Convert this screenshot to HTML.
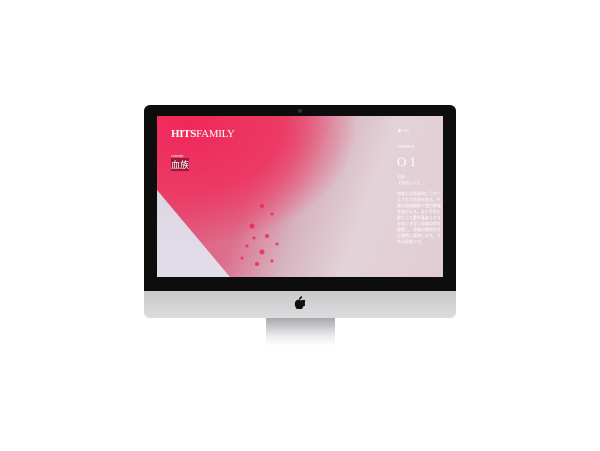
<!DOCTYPE html>
<html><head><style>
body{margin:0;width:600px;height:451px;background:#fff;position:relative;overflow:hidden;font-family:"Liberation Serif","Noto Serif CJK SC",serif}
.bez{position:absolute;left:144px;top:105px;width:312px;height:186px;background:#0d0d0d;border-radius:6px 6px 0 0}
.cam{position:absolute;left:298px;top:109px;width:4px;height:4px;border-radius:50%;background:#333}
.scr{position:absolute;left:157px;top:116px;width:286px;height:161px;overflow:hidden;
background:radial-gradient(ellipse 170px 120px at 30px 10px,#f0285a 0%,#ec3a64 55%,rgba(236,70,105,0) 100%),
linear-gradient(110deg,#e04a70 0%,#dd6f8e 35%,#d6b4c0 52%,#e3d2d8 70%,#e0cdd3 100%)}
.scr .light{position:absolute;left:0;top:0;width:286px;height:161px;background:linear-gradient(#d8d2e0,#e2dde8);clip-path:polygon(0 74px,0 161px,73px 161px)}
.chin{position:absolute;left:144px;top:291px;width:312px;height:27px;background:linear-gradient(#c9c9cb,#dcdcde);border-radius:0 0 6px 6px}
.stand{position:absolute;left:266px;top:318px;width:69px;height:28px;background:linear-gradient(#a8a8aa,#e8e8ea 60%,#fff)}
.t{position:absolute;color:#fff}
</style></head><body>
<div class="bez"></div><div class="cam"></div>
<div class="scr"><div class="light"></div>
<svg style="position:absolute;left:75px;top:70px" width="80" height="90"><g fill="#f0205a" opacity=".8">
<circle cx="30" cy="20" r="2"/><circle cx="40" cy="28" r="1.5"/><circle cx="20" cy="40" r="2.5"/><circle cx="35" cy="50" r="2"/><circle cx="15" cy="60" r="1.5"/><circle cx="30" cy="66" r="2.5"/><circle cx="45" cy="58" r="1.5"/><circle cx="25" cy="78" r="2"/><circle cx="10" cy="72" r="1.5"/><circle cx="40" cy="75" r="1.5"/><circle cx="22" cy="52" r="1.5"/></g></svg>
<div class="t" style="left:14px;top:12px;font-size:11px;font-weight:bold;letter-spacing:-.3px">HITS<span style="font-weight:normal">FAMILY</span></div>
<div class="t" style="left:14px;top:37px;font-size:4px">concept</div>
<div class="t" style="left:14px;top:42px;font-size:9px;background:#9a1a3a;font-family:'Noto Sans CJK JP',sans-serif">血族</div>
<div class="t" style="left:241px;top:12px;font-size:4px">▶ ON</div>
<div class="t" style="left:240px;top:28px;font-size:4px">NUMBER</div>
<div class="t" style="left:240px;top:38px;font-size:13px;letter-spacing:3px">O1</div>
<div class="t" style="left:240px;top:58px;font-size:4px">血族<br>【血族とは】</div>
<div class="t" style="left:240px;top:75px;width:44px;font-size:4px;line-height:6px;font-family:'Noto Sans CJK JP',sans-serif">血族とは家族的に下のつなされて家族を表す。不変の血族関係で強力家族を結びます。また子供と親として重を基本とするを描くきない血族の絆を縁関し、家族の関係性を正確的に表現します。それは家族です。</div>
</div>
<div class="chin"></div>
<svg style="position:absolute;left:294px;top:296px" width="11" height="13" viewBox="0 0 170 200"><path fill="#111" d="M150 150c-8 18-12 26-22 42-14 22-34 8-46 8-14 0-30 14-46-8C8 154 6 104 26 78c12-16 30-20 44-20 16 0 26 10 40 10 12 0 22-10 42-10 14 0 28 8 38 22-34 18-28 68 6 80zM112 40c8-10 14-24 12-38-12 1-26 9-34 19-8 9-14 23-12 36 14 1 26-7 34-17z"/></svg>
<div class="stand"></div>
</body></html>
